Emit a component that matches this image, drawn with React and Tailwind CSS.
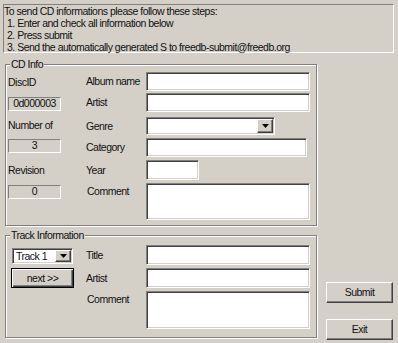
import React from 'react';

const sunken =
  'bg-white border border-t-[#808080] border-l-[#808080] border-b-white border-r-white shadow-[inset_1px_1px_0_#404040,inset_-1px_-1px_0_#d4d0c8]';
const raised =
  'border border-t-white border-l-white border-b-[#404040] border-r-[#404040] shadow-[inset_-1px_-1px_0_#808080]';
const staticBox =
  'border border-t-[#808080] border-l-[#808080] border-b-white border-r-white flex items-center justify-center';
const etched =
  'relative border border-[#808080] shadow-[inset_1px_1px_0_#fff,1px_1px_0_#fff]';

function Arrow() {
  return (
    <svg width="7" height="4" viewBox="0 0 7 4">
      <path d="M0 0h7L3.5 4z" fill="#000" />
    </svg>
  );
}

function Combo({ width, height, value }) {
  return (
    <div className={`${sunken} flex p-[1px] ${width} ${height}`}>
      <span className="flex-1 pl-[2px] flex items-center leading-none">{value}</span>
      <div className={`w-[16px] h-full bg-[#d4d0c8] ${raised} flex items-center justify-center`}>
        <Arrow />
      </div>
    </div>
  );
}

function Group({ title, height, children }) {
  return (
    <div className={`${etched} w-[312px] ${height}`}>
      <span className="absolute left-[4px] top-[-7px] px-[1px] bg-[#d4d0c8] leading-[13px]">{title}</span>
      <div className="flex">{children}</div>
    </div>
  );
}

function Row({ label, mt, input, top }) {
  return (
    <div className={`flex ${top ? 'items-start' : 'items-center'} ${mt}`}>
      <span className={`w-[60px] leading-[13px] ${top ? 'pt-[2px] pl-[1px]' : ''}`}>{label}</span>
      {input}
    </div>
  );
}

export default function App() {
  return (
    <div className="w-[398px] h-[343px] bg-[#d4d0c8] text-[#111] text-[10.5px] font-['Liberation_Sans',Arial,sans-serif] tracking-[-0.5px] overflow-hidden">
      <div className="ml-[3px] mt-[4px] w-[391px] h-[49px] border border-t-[#808080] border-l-[#808080] border-b-white border-r-white leading-[12px] whitespace-nowrap">
        <div>To send CD informations please follow these steps:</div>
        <div className="pl-[3px]">1. Enter and check all information below</div>
        <div className="pl-[3px]">2. Press submit</div>
        <div className="pl-[3px]">3. Send the automatically generated S to freedb-submit@freedb.org</div>
      </div>

      <div className="flex ml-[5px] mt-[11px]">
        <div className="flex flex-col">
          <Group title="CD Info" height="h-[162px]">
            <div className="ml-[2px] w-[53px] flex flex-col">
              <span className="mt-[11px] leading-[13px]">DiscID</span>
              <div className={`mt-[8px] h-[14px] ${staticBox}`}>0d000003</div>
              <span className="mt-[8px] leading-[13px]">Number of</span>
              <div className={`mt-[7px] h-[14px] ${staticBox}`}>3</div>
              <span className="mt-[11px] leading-[13px]">Revision</span>
              <div className={`mt-[8px] h-[14px] ${staticBox}`}>0</div>
            </div>
            <div className="ml-[25px] flex flex-col">
              <Row label="Album name" mt="mt-[7px]" input={<div className={`${sunken} w-[164px] h-[19px]`} />} />
              <Row label="Artist" mt="mt-[2px]" input={<div className={`${sunken} w-[164px] h-[19px]`} />} />
              <Row label="Genre" mt="mt-[5px]" input={<Combo width="w-[129px]" height="h-[18px]" value="" />} />
              <Row label="Category" mt="mt-[3px]" input={<div className={`${sunken} w-[161px] h-[19px]`} />} />
              <Row label="Year" mt="mt-[3px]" input={<div className={`${sunken} w-[53px] h-[20px]`} />} />
              <Row label="Comment" mt="mt-[3px]" top input={<div className={`${sunken} w-[164px] h-[37px]`} />} />
            </div>
          </Group>

          <div className="mt-[9px]">
            <Group title="Track Information" height="h-[103px]">
              <div className="ml-[5px] flex flex-col">
                <div className="mt-[12px] ml-[1px]">
                  <Combo width="w-[61px]" height="h-[16px]" value="Track 1" />
                </div>
                <button className="mt-[4px] w-[63px] h-[20px] bg-[#d4d0c8] border border-black shadow-[inset_1px_1px_0_#fff,inset_-1px_-1px_0_#404040,inset_-2px_-2px_0_#808080] leading-none">
                  next &gt;&gt;
                </button>
              </div>
              <div className="ml-[12px] flex flex-col">
                <Row label="Title" mt="mt-[9px]" input={<div className={`${sunken} w-[164px] h-[20px]`} />} />
                <Row label="Artist" mt="mt-[3px]" input={<div className={`${sunken} w-[164px] h-[20px]`} />} />
                <Row label="Comment" mt="mt-[3px]" top input={<div className={`${sunken} w-[164px] h-[38px]`} />} />
              </div>
            </Group>
          </div>
        </div>

        <div className="ml-[9px] flex flex-col">
          <button className={`mt-[218px] w-[67px] h-[21px] bg-[#d4d0c8] ${raised} leading-none`}>Submit</button>
          <button className={`mt-[16px] w-[67px] h-[21px] bg-[#d4d0c8] ${raised} leading-none`}>Exit</button>
        </div>
      </div>
    </div>
  );
}
